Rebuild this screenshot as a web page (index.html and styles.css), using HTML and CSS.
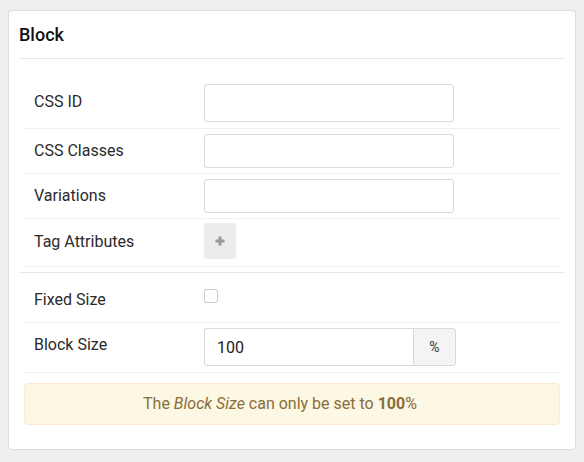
FILE: index.html
```html
<!DOCTYPE html>
<html>
<head>
<meta charset="utf-8">
<link rel="stylesheet" href="styles.css">
</head>
<body>
<div class="panel">
  <div class="panel-title">Block</div>
  <div class="section">
    <div class="row row-first">
      <div class="label">CSS ID</div>
      <div class="control"><input class="text tall" type="text"></div>
    </div>
    <div class="row">
      <div class="label">CSS Classes</div>
      <div class="control"><input class="text" type="text"></div>
    </div>
    <div class="row">
      <div class="label">Variations</div>
      <div class="control"><input class="text" type="text"></div>
    </div>
    <div class="row row-btn">
      <div class="label">Tag Attributes</div>
      <div class="control">
        <button class="add-btn" type="button" aria-label="Add">
          <svg width="10" height="10" viewBox="0 0 10 10"><path d="M5 0.5v9M0.5 5h9" stroke="#9a9a9a" stroke-width="3" fill="none"/></svg>
        </button>
      </div>
    </div>
  </div>
  <div class="section section-2">
    <div class="row">
      <div class="label">Fixed Size</div>
      <div class="control"><span class="checkbox"></span></div>
    </div>
    <div class="row row-group">
      <div class="label">Block Size</div>
      <div class="control">
        <div class="input-group">
          <input class="text group-input" type="text" value="100">
          <span class="addon">%</span>
        </div>
      </div>
    </div>
    <div class="alert">The <em>Block Size</em> can only be set to <strong>100</strong>%</div>
  </div>
</div>
</body>
</html>
```
FILE: styles.css
```css
html, body {
  margin: 0;
  padding: 0;
  background: #eeeeee;
}
body {
  font-family: Roboto, "Liberation Sans", sans-serif;
  color: #222;
  padding: 10px 8px 11px;
}
.panel {
  background: #fff;
  border: 1px solid #dcdcdc;
  border-radius: 3px;
  padding: 0 10px 10px;
  height: 440px;
  box-sizing: border-box;
}
.panel-title {
  font-size: 18px;
  font-weight: 500;
  line-height: 24px;
  color: #111;
  padding: 12px 0 11px;
  border-bottom: 1px solid #e6e6e6;
}
.section {
  padding: 20px 5px 5px;
  border-bottom: 1px solid #e8e8e8;
}
.section-2 {
  padding: 5px 5px 15px;
  border-bottom: none;
}
.row {
  display: flex;
  align-items: flex-start;
  padding: 5px 0;
  border-bottom: 1px solid #f0f0f0;
}
.row-first {
  padding-bottom: 6px;
}
.row-btn {
  padding: 4px 0 7px;
}
.row-group {
  padding-bottom: 6px;
}
.label {
  width: 170px;
  padding-left: 10px;
  padding-top: 7px;
  font-size: 16px;
  line-height: 20px;
  color: #2a2a2a;
  flex: none;
}
.row-first .label {
  padding-top: 8px;
}
.row-btn .label {
  padding-top: 9px;
}
.control {
  display: flex;
  align-items: flex-start;
  min-height: 34px;
}
.text {
  box-sizing: border-box;
  width: 250px;
  height: 34px;
  border: 1px solid #d9d9d9;
  border-radius: 3px;
  padding: 0 12px;
  font-family: Roboto, "Liberation Sans", sans-serif;
  font-size: 16px;
  color: #222;
  outline: none;
  margin: 0;
}
.tall {
  height: 38px;
}
.add-btn {
  width: 32px;
  height: 36px;
  border: none;
  border-radius: 3px;
  background: #ececec;
  display: flex;
  align-items: center;
  justify-content: center;
  padding: 0;
  margin: 0;
}
.add-btn svg {
  display: block;
}
.checkbox {
  display: block;
  box-sizing: border-box;
  width: 14px;
  height: 14px;
  margin-top: 6px;
  border: 1px solid #c8c8c8;
  border-radius: 2px;
  background: #fff;
}
.input-group {
  display: flex;
  height: 38px;
}
.group-input {
  width: 209px;
  height: 38px;
  border-radius: 3px 0 0 3px;
  border-right: none;
}
.addon {
  box-sizing: border-box;
  width: 43px;
  height: 38px;
  border: 1px solid #d9d9d9;
  border-radius: 0 3px 3px 0;
  background: #f4f4f4;
  display: flex;
  align-items: center;
  justify-content: center;
  font-size: 14px;
  color: #333;
}
.alert {
  margin-top: 10px;
  background: #fcf8e3;
  border: 1px solid #faebcc;
  border-radius: 4px;
  padding: 10px 34px 10px 10px;
  color: #8a6d3b;
  font-size: 16px;
  line-height: 20px;
  text-align: center;
}
.alert strong {
  font-weight: 700;
}
```
